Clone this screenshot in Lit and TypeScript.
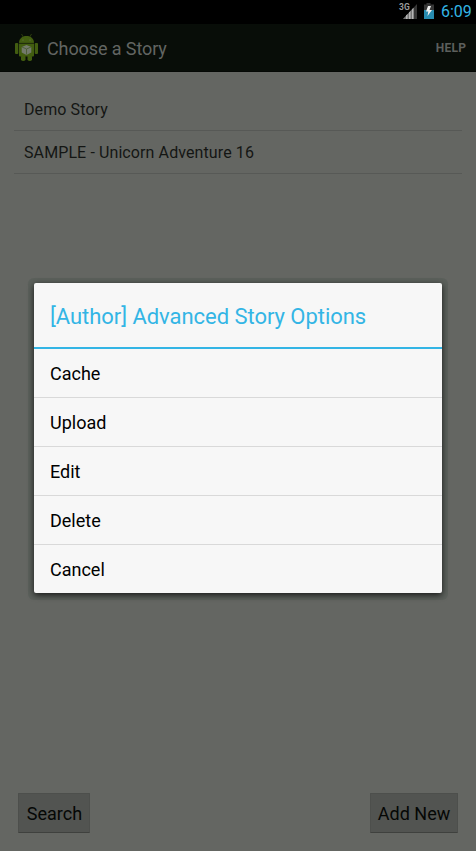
import { LitElement, html, css } from "lit";
import { customElement } from "lit/decorators.js";

@customElement("app-root")
export class AppRoot extends LitElement {
  static styles = css`
    :host {
      display: flex;
      flex-direction: column;
      position: relative;
      width: 476px;
      height: 851px;
      overflow: hidden;
      background: #646662;
      font-family: Roboto, "Noto Sans", sans-serif;
      color: #141614;
    }
    * { box-sizing: border-box; }
    svg { display: block; flex: none; }
    .status {
      height: 24px;
      flex: none;
      display: flex;
      justify-content: flex-end;
      background: #000;
      color: #33b5e5;
    }
    .clock {
      width: 31px;
      margin-left: 6px;
      margin-right: 4px;
      font-size: 16px;
      line-height: 24px;
      white-space: nowrap;
    }
    .net {
      font-size: 8.5px;
      font-weight: 700;
      line-height: 15px;
      color: #9a9a9a;
      width: 10px;
    }
    .bar {
      height: 48px;
      flex: none;
      display: flex;
      align-items: center;
      padding: 0 10px 0 14px;
      background: #080d08;
      color: #626562;
      border-bottom: 1px solid #050805;
    }
    .bar-title {
      flex: 1;
      margin-left: 8px;
      font-size: 18px;
      letter-spacing: -0.1px;
      line-height: 24px;
      padding-top: 2px;
    }
    .help {
      font-size: 12px;
      font-weight: 700;
      letter-spacing: 0.3px;
      margin-right: -0.3px;
      color: #5c5f5c;
    }
    .list { flex: 1; padding: 16px 14px 0; }
    .row {
      height: 43px;
      padding-left: 10px;
      font-size: 16px;
      letter-spacing: 0.1px;
      line-height: 43px;
      border-bottom: 1px solid #575956;
    }
    .buttons {
      display: flex;
      justify-content: space-between;
      padding: 0 18px 18px;
    }
    .btn {
      height: 40px;
      font-size: 18px;
      line-height: 39px;
      text-align: center;
      color: #050705;
      background: #525451;
      border: 1px solid #4d4f4c;
      border-bottom-color: #3f413e;
      border-radius: 1px;
    }
    .search { width: 72px; padding-left: 1px; }
    .add { width: 88px; }
    .dialog {
      position: absolute;
      left: 34px;
      top: 283px;
      width: 408px;
      height: 310px;
      background: #f7f7f7;
      border-radius: 2px;
      color: #000;
      box-shadow: 0 2px 6px rgba(0, 0, 0, 0.75), 0 1px 0 6px rgba(70, 84, 74, 0.28);
    }
    .dialog-title {
      height: 66px;
      padding-left: 16px;
      font-size: 22px;
      letter-spacing: -0.04px;
      line-height: 67px;
      color: #33b5e5;
      border-bottom: 2px solid #33b5e5;
    }
    .item {
      height: 49px;
      padding-left: 16px;
      font-size: 18px;
      line-height: 49px;
      border-bottom: 1px solid #d9d9d9;
    }
    .item:last-child { border-bottom: 0; }
  `;

  render() {
    return html`
      <div class="status">
        <span class="net">3G</span>
        <svg width="8" height="24" viewBox="0 0 8 24" overflow="visible">
          <path d="M-6 19H8V4Z" fill="#363636" />
          <path d="M-6 19H4.500V7.800Z" fill="#757575" />
          <path d="M-3 19H-1.500V14L-3 15.500ZM0 19H1.500V11L0 12.600ZM3 19H4.500V7.800L3 9.400Z" fill="#b5b5b5" />
        </svg>
        <svg width="18" height="24" viewBox="0 0 18 24">
          <path d="M9.500 3h4v1.500h3.500v6H7v-6h2.500z" fill="#353535" />
          <path d="M7 10h10v9H7z" fill="#278bb0" />
          <path d="M11 6h3l-1.500 4H15l-4.500 6 .8-4.500H9z" fill="#eee" />
        </svg>
        <span class="clock">6:09</span>
      </div>
      <div class="bar">
        <svg width="25" height="30" viewBox="0 0 25 30">
          <g fill="#425d10">
            <path d="M5 10c0-4.300 3-7 7.500-7s7.500 2.700 7.500 7z" />
            <path d="M5 10.600h15v11.900q0 1-1 1H6q-1 0-1-1z" />
            <rect x="1" y="10" width="3.300" height="11" rx="1" />
            <rect x="20.700" y="10" width="3.300" height="11" rx="1" />
            <rect x="7" y="22" width="4.500" height="6" rx="1.800" />
            <rect x="13.500" y="22" width="4.500" height="6" rx="1.800" />
          </g>
          <path d="M7.500 1l1.800 3M17.500 1l-1.800 3" stroke="#34490f" stroke-width=".8" />
          <path d="M5 10.300h15" stroke="#1f2d0b" stroke-width=".7" />
          <circle cx="9" cy="7" r=".6" fill="#69745a" />
          <circle cx="16" cy="7" r=".6" fill="#69745a" />
          <path d="M12.500 12l4.800 2v5.500l-4.800 2.500-4.800-2.500V14z" fill="#737a6c" />
          <path d="M8 14l4.500 2 4.500-2M12.500 16v5.500" fill="none" stroke="#465a2c" stroke-width=".8" />
        </svg>
        <span class="bar-title">Choose a Story</span>
        <span class="help">HELP</span>
      </div>
      <div class="list">
        ${["Demo Story", "SAMPLE - Unicorn Adventure 16"].map((t) => html`<div class="row">${t}</div>`)}
      </div>
      <div class="buttons">
        <div class="btn search">Search</div>
        <div class="btn add">Add New</div>
      </div>
      <div class="dialog">
        <div class="dialog-title">[Author] Advanced Story Options</div>
        ${["Cache", "Upload", "Edit", "Delete", "Cancel"].map((t) => html`<div class="item">${t}</div>`)}
      </div>
    `;
  }
}
